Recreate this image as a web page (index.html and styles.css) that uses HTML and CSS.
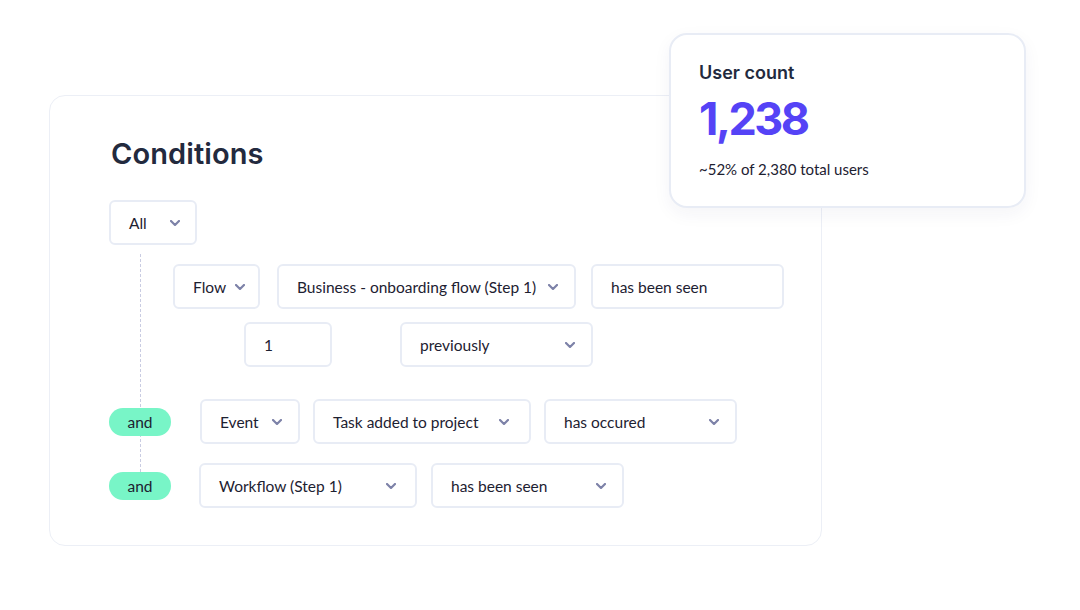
FILE: index.html
```html
<!DOCTYPE html>
<html lang="en">
<head>
    <meta charset="UTF-8">
    <meta name="viewport" content="width=device-width, initial-scale=1.0">
    <title>Conditions</title>
    <link rel="stylesheet" href="styles.css">
</head>
<body>
    <div class="page">
        <!-- Conditions builder -->
        <div class="conditions-card">
            <h1 class="conditions-title">Conditions</h1>

            <div class="select select-all">
                <span>All</span>
                <svg class="chevron" viewBox="0 0 10 6"><path d="M1 1l4 4 4-4"/></svg>
            </div>

            <div class="tree">
                <div class="row row-flow">
                    <div class="select w-flow"><span>Flow</span><svg class="chevron" viewBox="0 0 10 6"><path d="M1 1l4 4 4-4"/></svg></div>
                    <div class="select w-business"><span>Business - onboarding flow (Step 1)</span><svg class="chevron" viewBox="0 0 10 6"><path d="M1 1l4 4 4-4"/></svg></div>
                    <div class="select w-seen plain"><span>has been seen</span></div>
                </div>

                <div class="row row-count">
                    <div class="select w-count plain"><span>1</span></div>
                    <div class="select w-wide gap-previously"><span>previously</span><svg class="chevron" viewBox="0 0 10 6"><path d="M1 1l4 4 4-4"/></svg></div>
                </div>

                <div class="row row-event">
                    <span class="pill">and</span>
                    <div class="select w-event"><span>Event</span><svg class="chevron" viewBox="0 0 10 6"><path d="M1 1l4 4 4-4"/></svg></div>
                    <div class="select w-task"><span>Task added to project</span><svg class="chevron" viewBox="0 0 10 6"><path d="M1 1l4 4 4-4"/></svg></div>
                    <div class="select w-wide gap-occured"><span>has occured</span><svg class="chevron" viewBox="0 0 10 6"><path d="M1 1l4 4 4-4"/></svg></div>
                </div>

                <div class="row row-workflow">
                    <span class="pill">and</span>
                    <div class="select w-workflow"><span>Workflow (Step 1)</span><svg class="chevron" viewBox="0 0 10 6"><path d="M1 1l4 4 4-4"/></svg></div>
                    <div class="select w-wide gap-seen"><span>has been seen</span><svg class="chevron" viewBox="0 0 10 6"><path d="M1 1l4 4 4-4"/></svg></div>
                </div>
            </div>
        </div>

        <!-- Floating stat card -->
        <div class="count-card">
            <div class="count-label">User count</div>
            <div class="count-value">1,238</div>
            <div class="count-note">~52% of 2,380 total users</div>
        </div>
    </div>
</body>
</html>
```

FILE: styles.css
```css
body {
    margin: 0;
    background-color: #ffffff;
    font-family: "Lato", "Noto Sans", sans-serif;
    color: #1d2131;
}

.page {
    position: relative;
    width: 1080px;
    height: 610px;
    padding: 95px 0 0 49px;
    box-sizing: border-box;
}

/* Main card */
.conditions-card {
    width: 773px;
    height: 451px;
    box-sizing: border-box;
    border: 1px solid #eceff6;
    border-radius: 16px;
    padding: 40px 0 0 59px;
}

.conditions-title {
    margin: 0 0 28px 2px;
    font-family: "Inter", sans-serif;
    font-size: 29px;
    font-weight: 600;
    line-height: 36px;
    letter-spacing: 0.1px;
    color: #232a3e;
}

/* Select boxes */
.select {
    display: flex;
    align-items: center;
    justify-content: space-between;
    height: 45px;
    box-sizing: border-box;
    padding: 0 16px 0 18px;
    border: 2px solid #e8ecf5;
    border-radius: 6px;
    background-color: #ffffff;
    font-size: 15.5px;
    white-space: nowrap;
}

.select.plain {
    justify-content: flex-start;
}

.chevron {
    width: 10px;
    height: 6px;
    flex-shrink: 0;
    fill: none;
    stroke: #7d82a8;
    stroke-width: 2.2;
    stroke-linecap: round;
    stroke-linejoin: round;
}

.select-all {
    width: 88px;
    height: 45px;
    padding-right: 15px;
}

/* Rule tree with dashed connector */
.tree {
    position: relative;
    padding-top: 19px;
}

.tree::before {
    content: "";
    position: absolute;
    left: 31px;
    top: 9px;
    height: 218px;
    border-left: 1px dashed #c9cce2;
}

.row {
    position: relative;
    display: flex;
    align-items: center;
}

.row-flow { padding-left: 64px; }
.row-count { padding-left: 135px; margin-top: 13px; }
.row-event { margin-top: 32px; }
.row-workflow { margin-top: 19px; }

.pill {
    width: 62px;
    height: 28px;
    line-height: 28px;
    border-radius: 14px;
    background-color: #78f5c7;
    text-align: center;
    font-size: 15.5px;
    color: #1d2131;
}

.w-flow { width: 87px; padding-right: 13px; }
.w-business { width: 299px; margin-left: 17px; padding-right: 16px; }
.w-seen { width: 193px; margin-left: 15px; }
.w-count { width: 88px; }
.w-wide { width: 193px; }
.gap-previously { margin-left: 68px; }
.w-event { width: 100px; margin-left: 29px; }
.w-task { width: 218px; margin-left: 13px; padding-right: 20px; }
.gap-occured { margin-left: 13px; }
.w-workflow { width: 218px; margin-left: 28px; padding-right: 19px; }
.gap-seen { margin-left: 14px; }

/* User count card */
.count-card {
    position: absolute;
    left: 669px;
    top: 33px;
    width: 357px;
    height: 175px;
    box-sizing: border-box;
    padding: 26px 28px 0 28px;
    border: 2px solid #e8ecf5;
    border-radius: 18px;
    background-color: #ffffff;
    box-shadow: 0 6px 18px rgba(30, 40, 90, 0.05);
}

.count-label {
    font-family: "Inter", sans-serif;
    font-size: 18px;
    font-weight: 600;
    line-height: 24px;
    color: #232a3e;
}

.count-value {
    margin-top: 6px;
    font-family: "Inter", sans-serif;
    font-size: 45px;
    font-weight: 700;
    line-height: 56px;
    letter-spacing: -2.5px;
    color: #5543f6;
}

.count-note {
    margin-top: 12px;
    font-size: 15px;
    line-height: 20px;
    color: #1d2131;
}
```
